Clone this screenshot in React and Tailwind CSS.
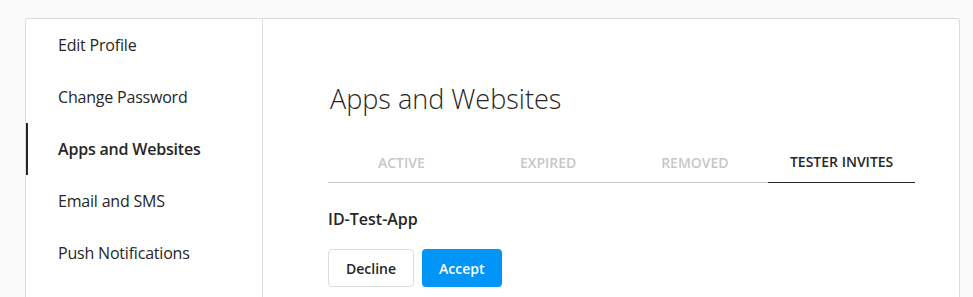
import React, { useState } from 'react';

const navItems = ['Edit Profile', 'Change Password', 'Apps and Websites', 'Email and SMS', 'Push Notifications'];
const tabs = ['Active', 'Expired', 'Removed', 'Tester Invites'];

export default function App() {
  const [activeNav, setActiveNav] = useState('Apps and Websites');
  const [activeTab, setActiveTab] = useState('Tester Invites');

  return (
    <div className="min-h-screen bg-[#fafafa] pt-[18px] pl-[25px] text-[#262626]" style={{ fontFamily: '"Open Sans", "Noto Sans", sans-serif' }}>
      <div className="w-[935px] h-[400px] bg-white border border-[#dbdbdb] rounded-[3px] flex">
        {/* Sidebar */}
        <ul className="w-[237px] shrink-0 border-r border-[#dbdbdb]">
          {navItems.map((item) => (
            <li
              key={item}
              onClick={() => setActiveNav(item)}
              className={`h-[52px] flex items-center pl-[30px] border-l-2 text-[16px] tracking-[-0.2px] cursor-pointer ${
                activeNav === item ? 'border-[#262626] font-semibold' : 'border-transparent hover:border-[#dbdbdb]'
              }`}
            >
              {item}
            </li>
          ))}
        </ul>

        {/* Main */}
        <div className="flex-1 pt-[64px] pl-[65px] pr-[44px]">
          <h1 className="pl-[2px] text-[27px] leading-[32px] font-light">Apps and Websites</h1>

          <div className="mt-[26px] flex border-b border-[#c7c7c7]">
            {tabs.map((tab) => (
              <button
                key={tab}
                onClick={() => setActiveTab(tab)}
                className={`flex-1 h-[42px] -mb-px flex items-center justify-center text-[14px] font-semibold uppercase ${
                  activeTab === tab ? 'text-[#262626] border-b border-[#262626]' : 'text-[#c7c7c7]'
                }`}
              >
                {tab}
              </button>
            ))}
          </div>

          <h2 className="mt-[24px] text-[16px] leading-[24px] font-semibold">ID-Test-App</h2>

          <div className="mt-[18px] flex gap-2">
            <button className="h-[38px] px-[17px] border border-[#dbdbdb] rounded-[4px] bg-white text-[14px] font-semibold">
              Decline
            </button>
            <button className="h-[38px] px-[17px] rounded-[4px] bg-[#0095f6] text-white text-[14px] font-semibold">
              Accept
            </button>
          </div>
        </div>
      </div>
    </div>
  );
}
